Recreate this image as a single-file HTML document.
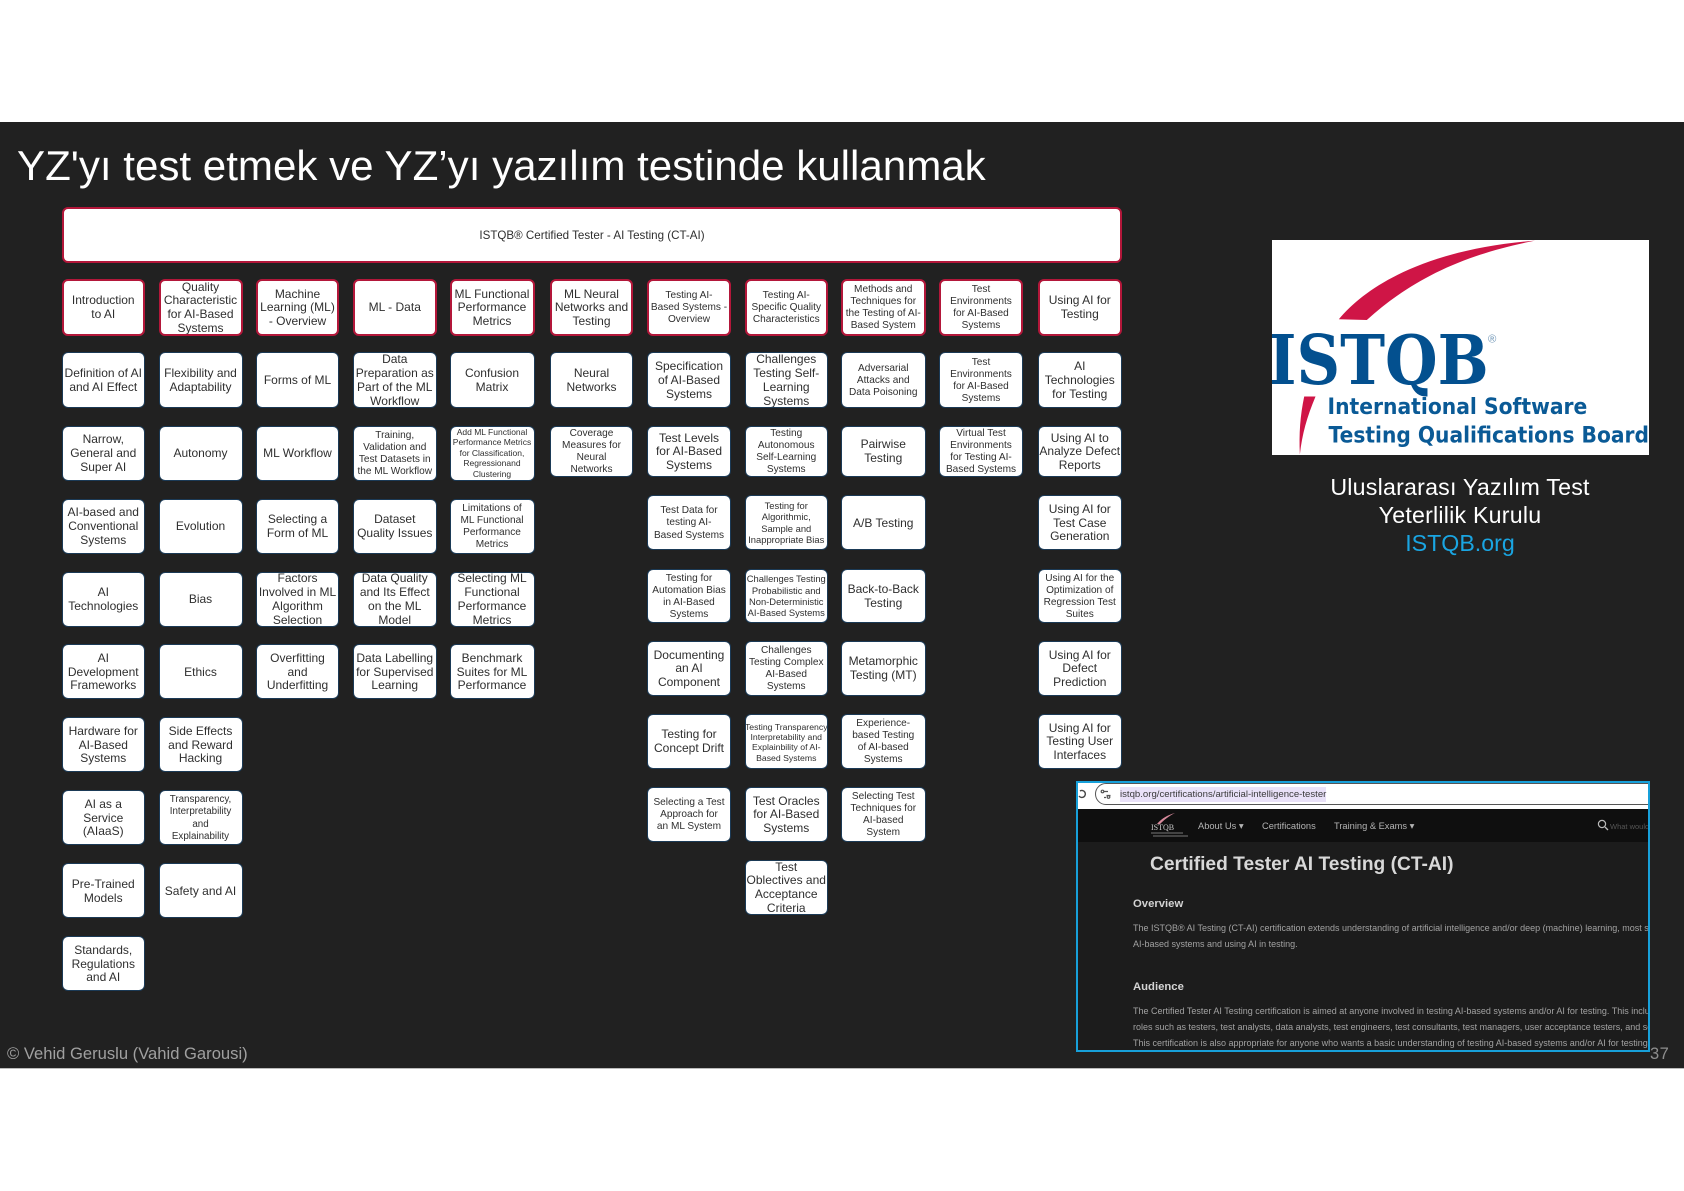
<!DOCTYPE html>
<html lang="tr"><head><meta charset="utf-8"><title>YZ</title>
<style>
html,body{margin:0;padding:0;background:#fff}
body{width:1684px;height:1191px;position:relative;overflow:hidden;font-family:"Liberation Sans",sans-serif}
#band{position:absolute;left:0;top:122px;width:1684px;height:947px;background:#212121;border-bottom:1px solid #bbb;box-sizing:border-box}
#title{position:absolute;left:17px;top:140px;font-size:42.1px;line-height:52px;color:#fff;white-space:nowrap}
#grid{position:absolute;left:0;top:0;filter:blur(.3px)}
.b{position:absolute;box-sizing:border-box;background:#fff;border-radius:6px;display:flex;align-items:center;justify-content:center;text-align:center;color:#2f2f2f;font-size:12px;line-height:13.8px;white-space:nowrap;border:1px solid #1b3a56;overflow:hidden;padding-top:2px}
.h{border:2px solid #b3173a}
.m{font-size:10.1px;line-height:12.1px}
.s{font-size:8.5px;line-height:10.4px;padding-top:0}
.t{font-size:9.4px;line-height:11.2px;padding-top:0}
.u{font-size:8.7px;line-height:10.3px}
.c1{left:61.5px;width:83.5px}.c2{left:158.5px;width:84px}.c3{left:256px;width:83px}.c4{left:353px;width:83.5px}.c5{left:449.5px;width:85px}.c6{left:550px;width:83px}.c7{left:647px;width:84px}.c8{left:745px;width:82.5px}.c9{left:841px;width:84.5px}.c10{left:939px;width:84px}.c11{left:1038px;width:83.5px}
.r0{top:279px;height:56.5px}
.a1{top:352px;height:55.5px}.a2{top:425.5px;height:55px}.a3{top:498.5px;height:55px}.a4{top:571.5px;height:55px}.a5{top:644px;height:55px}.a6{top:717px;height:55px}.a7{top:790px;height:55px}.a8{top:863px;height:55px}.a9{top:936px;height:55px}
.b2{top:425.5px;height:51.5px}.b3{top:495px;height:55px}.b4{top:568.5px;height:54.5px}.b5{top:641px;height:54.5px}.b6{top:713.5px;height:55.5px}.b7{top:787px;height:54.5px}.b8{top:859.5px;height:55.5px}
#logo{position:absolute;left:1272px;top:239.5px;width:376.5px;height:215.5px;background:#fff;overflow:hidden}
#cap{position:absolute;left:1260px;width:400px;top:473px;text-align:center;font-size:23.2px;line-height:28px;color:#fff;letter-spacing:.22px}
#cap span{color:#1aa5e2;letter-spacing:0}
#foot{position:absolute;left:7px;top:1044px;font-size:16.6px;line-height:20px;color:#a0a0a0;white-space:nowrap}
#pg{position:absolute;left:1650px;top:1044px;font-size:16.5px;line-height:20px;color:#8e8e8e;letter-spacing:.5px}
#shot{position:absolute;left:1076px;top:781px;width:574px;height:271px;box-sizing:border-box;border:2px solid #17a0da;background:#1c1c1c;overflow:hidden}
#shot div{position:absolute;white-space:nowrap}
#bar{left:0;top:0;width:570px;height:26px;background:#fff}
#pill{left:17px;top:0;width:600px;height:22px;box-sizing:border-box;border:1px solid #555;border-radius:12px 0 0 12px}
#sel{left:42px;top:4px;width:206px;height:15px;background:#e9e1f8}
#url{left:42px;top:4px;font-size:9.6px;line-height:15px;color:#3a3a3a}
#nav{left:0;top:26px;width:570px;height:33px;background:#0f0f0f}
.n{font-size:9.3px;line-height:12px;color:#b4b4b4;top:37px}
#hd{left:72px;top:70px;font-size:19.2px;line-height:24px;font-weight:bold;color:#d8d8d8}
.o{left:55px;font-size:11.3px;line-height:13px;font-weight:bold;color:#d4d4d4}
.p{left:55px;font-size:9px;line-height:12px;color:#a2a2a2}
</style></head><body>
<div id="band"></div>
<div id="title">YZ'yı test etmek ve YZ’yı yazılım testinde kullanmak</div>
<div id="grid">
<div class="b h" style="left:62px;top:207px;width:1060px;height:56px;font-size:11.6px">ISTQB® Certified Tester - AI Testing (CT-AI)</div>

<div class="b h c1 r0">Introduction<br>to AI</div>
<div class="b h c2 r0">Quality<br>Characteristic<br>for AI-Based<br>Systems</div>
<div class="b h c3 r0">Machine<br>Learning (ML)<br>- Overview</div>
<div class="b h c4 r0">ML - Data</div>
<div class="b h c5 r0">ML Functional<br>Performance<br>Metrics</div>
<div class="b h c6 r0">ML Neural<br>Networks and<br>Testing</div>
<div class="b h m c7 r0">Testing AI-<br>Based Systems -<br>Overview</div>
<div class="b h m c8 r0">Testing AI-<br>Specific Quality<br>Characteristics</div>
<div class="b h m c9 r0">Methods and<br>Techniques for<br>the Testing of AI-<br>Based System</div>
<div class="b h m c10 r0">Test<br>Environments<br>for AI-Based<br>Systems</div>
<div class="b h c11 r0">Using AI for<br>Testing</div>

<div class="b c1 a1">Definition of AI<br>and AI Effect</div>
<div class="b c1 a2">Narrow,<br>General and<br>Super AI</div>
<div class="b c1 a3">AI-based and<br>Conventional<br>Systems</div>
<div class="b c1 a4">AI<br>Technologies</div>
<div class="b c1 a5">AI<br>Development<br>Frameworks</div>
<div class="b c1 a6">Hardware for<br>AI-Based<br>Systems</div>
<div class="b c1 a7">AI as a<br>Service<br>(AIaaS)</div>
<div class="b c1 a8">Pre-Trained<br>Models</div>
<div class="b c1 a9">Standards,<br>Regulations<br>and AI</div>

<div class="b c2 a1">Flexibility and<br>Adaptability</div>
<div class="b c2 a2">Autonomy</div>
<div class="b c2 a3">Evolution</div>
<div class="b c2 a4">Bias</div>
<div class="b c2 a5">Ethics</div>
<div class="b c2 a6">Side Effects<br>and Reward<br>Hacking</div>
<div class="b m c2 a7" style="font-size:9.8px">Transparency,<br>Interpretability<br>and<br>Explainability</div>
<div class="b c2 a8">Safety and AI</div>

<div class="b c3 a1">Forms of ML</div>
<div class="b c3 a2">ML Workflow</div>
<div class="b c3 a3">Selecting a<br>Form of ML</div>
<div class="b c3 a4">Factors<br>Involved in ML<br>Algorithm<br>Selection</div>
<div class="b c3 a5">Overfitting<br>and<br>Underfitting</div>

<div class="b c4 a1">Data<br>Preparation as<br>Part of the ML<br>Workflow</div>
<div class="b m c4 a2">Training,<br>Validation and<br>Test Datasets in<br>the ML Workflow</div>
<div class="b c4 a3">Dataset<br>Quality Issues</div>
<div class="b c4 a4">Data Quality<br>and Its Effect<br>on the ML<br>Model</div>
<div class="b c4 a5">Data Labelling<br>for Supervised<br>Learning</div>

<div class="b c5 a1">Confusion<br>Matrix</div>
<div class="b s c5 a2">Add ML Functional<br>Performance Metrics<br>for Classification,<br>Regressionand<br>Clustering</div>
<div class="b m c5 a3">Limitations of<br>ML Functional<br>Performance<br>Metrics</div>
<div class="b c5 a4">Selecting ML<br>Functional<br>Performance<br>Metrics</div>
<div class="b c5 a5">Benchmark<br>Suites for ML<br>Performance</div>

<div class="b c6 a1">Neural<br>Networks</div>
<div class="b m c6 b2">Coverage<br>Measures for<br>Neural<br>Networks</div>

<div class="b c7 a1">Specification<br>of AI-Based<br>Systems</div>
<div class="b c7 b2">Test Levels<br>for AI-Based<br>Systems</div>
<div class="b m c7 b3">Test Data for<br>testing AI-<br>Based Systems</div>
<div class="b m c7 b4">Testing for<br>Automation Bias<br>in AI-Based<br>Systems</div>
<div class="b c7 b5">Documenting<br>an AI<br>Component</div>
<div class="b c7 b6">Testing for<br>Concept Drift</div>
<div class="b m c7 b7">Selecting a Test<br>Approach for<br>an ML System</div>

<div class="b c8 a1">Challenges<br>Testing Self-<br>Learning<br>Systems</div>
<div class="b m c8 b2">Testing<br>Autonomous<br>Self-Learning<br>Systems</div>
<div class="b t c8 b3">Testing for<br>Algorithmic,<br>Sample and<br>Inappropriate Bias</div>
<div class="b t c8 b4">Challenges Testing<br>Probabilistic and<br>Non-Deterministic<br>AI-Based Systems</div>
<div class="b m c8 b5">Challenges<br>Testing Complex<br>AI-Based<br>Systems</div>
<div class="b u c8 b6">Testing Transparency<br>Interpretability and<br>Explainbility of AI-<br>Based Systems</div>
<div class="b c8 b7">Test Oracles<br>for AI-Based<br>Systems</div>
<div class="b c8 b8">Test<br>Oblectives and<br>Acceptance<br>Criteria</div>

<div class="b m c9 a1">Adversarial<br>Attacks and<br>Data Poisoning</div>
<div class="b c9 b2">Pairwise<br>Testing</div>
<div class="b c9 b3">A/B Testing</div>
<div class="b c9 b4">Back-to-Back<br>Testing</div>
<div class="b c9 b5">Metamorphic<br>Testing (MT)</div>
<div class="b m c9 b6">Experience-<br>based Testing<br>of AI-based<br>Systems</div>
<div class="b m c9 b7">Selecting Test<br>Techniques for<br>AI-based<br>System</div>

<div class="b m c10 a1">Test<br>Environments<br>for AI-Based<br>Systems</div>
<div class="b m c10 b2">Virtual Test<br>Environments<br>for Testing AI-<br>Based Systems</div>

<div class="b c11 a1">AI<br>Technologies<br>for Testing</div>
<div class="b c11 b2">Using AI to<br>Analyze Defect<br>Reports</div>
<div class="b c11 b3">Using AI for<br>Test Case<br>Generation</div>
<div class="b m c11 b4">Using AI for the<br>Optimization of<br>Regression Test<br>Suites</div>
<div class="b c11 b5">Using AI for<br>Defect<br>Prediction</div>
<div class="b c11 b6">Using AI for<br>Testing User<br>Interfaces</div>
</div>

<div id="logo">
<svg width="376.5" height="215.5" viewBox="96 58 1129 647" style="position:absolute;left:0;top:0">
<path d="M296 296C380 195 560 85 885 60C650 105 500 190 380 298Z" fill="#cf1546"/>
<path d="M192 528L226 528C200 590 186 640 179 702C176 640 180 585 192 528Z" fill="#cf1546"/>
<text x="84" y="490" font-family="DejaVu Serif" font-weight="bold" font-size="206" fill="#03508f" textLength="662" lengthAdjust="spacingAndGlyphs">ISTQB</text>
<text x="744" y="366" font-family="Liberation Sans" font-size="34" fill="#6d94b5">®</text>
<text x="262" y="581" font-family="DejaVu Sans" font-weight="bold" font-size="68" fill="#0a5a96" textLength="780" lengthAdjust="spacingAndGlyphs">International Software</text>
<text x="265" y="666" font-family="DejaVu Sans" font-weight="bold" font-size="68" fill="#0a5a96" textLength="962" lengthAdjust="spacingAndGlyphs">Testing Qualifications Board</text>
</svg>
</div>
<div id="cap">Uluslararası Yazılım Test<br>Yeterlilik Kurulu<br><span>ISTQB.org</span></div>
<div id="foot">© Vehid Geruslu (Vahid Garousi)</div>
<div id="pg">37</div>

<div id="shot">
<div id="bar"></div>
<div id="pill"></div>
<div id="sel"></div>
<div id="url">istqb.org/certifications/artificial-intelligence-tester</div>
<svg style="position:absolute;left:0;top:0" width="40" height="26"><path d="M2 8a3.5 3.5 0 1 1-1 5" fill="none" stroke="#444" stroke-width="1.4"/><g stroke="#555" stroke-width="1.2" fill="none"><path d="M26 8.5h4M28.500 12.500h4M26 14.500h2"/><circle cx="24.500" cy="8.500" r="1.300"/><circle cx="30.500" cy="14" r="1.300"/></g></svg>
<div id="nav"></div>
<svg style="position:absolute;left:70px;top:28px" width="44" height="30">
<path d="M9 13C14 7 20 4 27 2C21 5 16 9 12 13Z" fill="#d88a9c"/>
<text x="3" y="19" font-family="Liberation Serif" font-size="8" fill="#c8c8c8">ISTQB</text>
<path d="M3 22h32M5 25h35" stroke="#777" stroke-width="1"/>
</svg>
<div class="n" style="left:120px">About Us ▾</div>
<div class="n" style="left:184px">Certifications</div>
<div class="n" style="left:256px">Training &amp; Exams ▾</div>
<svg style="position:absolute;left:518px;top:35px" width="14" height="14"><circle cx="6" cy="6" r="3.600" fill="none" stroke="#bbb" stroke-width="1.200"/><path d="M9 9l3 3" stroke="#bbb" stroke-width="1.300"/></svg>
<div class="n" style="left:532px;color:#555;font-size:7.500px;top:38px">What would</div>
<div id="hd">Certified Tester AI Testing (CT-AI)</div>
<div class="o" style="top:115px">Overview</div>
<div class="p" style="top:139px">The ISTQB® AI Testing (CT-AI) certification extends understanding of artificial intelligence and/or deep (machine) learning, most specifically testing</div>
<div class="p" style="top:155px">AI-based systems and using AI in testing.</div>
<div class="o" style="top:198px">Audience</div>
<div class="p" style="top:222px">The Certified Tester AI Testing certification is aimed at anyone involved in testing AI-based systems and/or AI for testing. This includes people in</div>
<div class="p" style="top:238px">roles such as testers, test analysts, data analysts, test engineers, test consultants, test managers, user acceptance testers, and software developers.</div>
<div class="p" style="top:254px">This certification is also appropriate for anyone who wants a basic understanding of testing AI-based systems and/or AI for testing, such as</div>
</div>
</body></html>
